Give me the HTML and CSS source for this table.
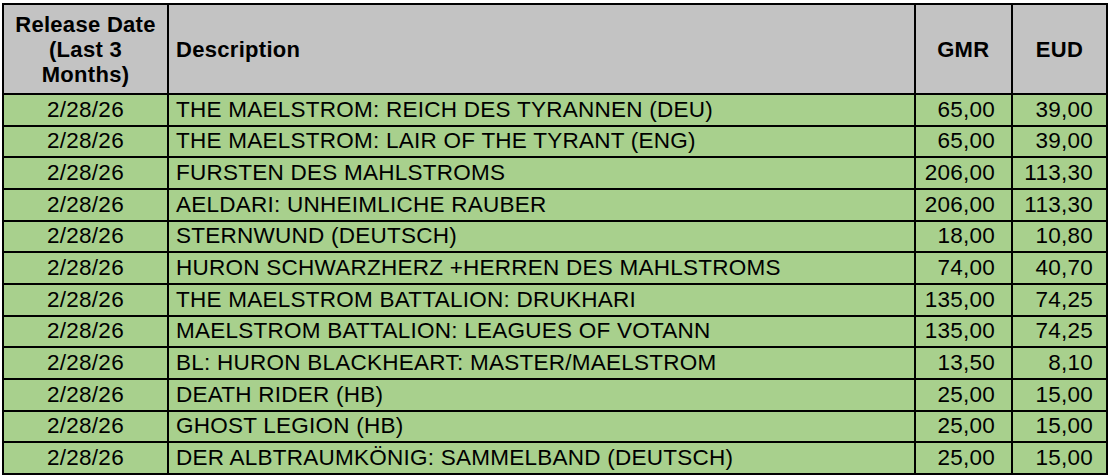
FILE: index.html
```html
<!DOCTYPE html>
<html lang="de">
<head>
<meta charset="utf-8">
<title>Release List</title>
<link rel="stylesheet" href="styles.css">
</head>
<body>
<table class="sheet">
  <colgroup>
    <col class="c-date">
    <col class="c-desc">
    <col class="c-gmr">
    <col class="c-eud">
  </colgroup>
  <thead>
    <tr class="head">
      <th class="h-date">Release Date<br>(Last 3<br>Months)</th>
      <th class="h-desc">Description</th>
      <th class="h-num">GMR</th>
      <th class="h-num">EUD</th>
    </tr>
  </thead>
  <tbody>
    <tr><td class="date">2/28/26</td><td class="desc">THE MAELSTROM: REICH DES TYRANNEN (DEU)</td><td class="gmr">65,00</td><td class="eud">39,00</td></tr>
    <tr><td class="date">2/28/26</td><td class="desc">THE MAELSTROM: LAIR OF THE TYRANT (ENG)</td><td class="gmr">65,00</td><td class="eud">39,00</td></tr>
    <tr><td class="date">2/28/26</td><td class="desc">FURSTEN DES MAHLSTROMS</td><td class="gmr">206,00</td><td class="eud">113,30</td></tr>
    <tr><td class="date">2/28/26</td><td class="desc">AELDARI: UNHEIMLICHE RAUBER</td><td class="gmr">206,00</td><td class="eud">113,30</td></tr>
    <tr><td class="date">2/28/26</td><td class="desc">STERNWUND (DEUTSCH)</td><td class="gmr">18,00</td><td class="eud">10,80</td></tr>
    <tr><td class="date">2/28/26</td><td class="desc">HURON SCHWARZHERZ +HERREN DES MAHLSTROMS</td><td class="gmr">74,00</td><td class="eud">40,70</td></tr>
    <tr><td class="date">2/28/26</td><td class="desc">THE MAELSTROM BATTALION: DRUKHARI</td><td class="gmr">135,00</td><td class="eud">74,25</td></tr>
    <tr><td class="date">2/28/26</td><td class="desc">MAELSTROM BATTALION: LEAGUES OF VOTANN</td><td class="gmr">135,00</td><td class="eud">74,25</td></tr>
    <tr><td class="date">2/28/26</td><td class="desc">BL: HURON BLACKHEART: MASTER/MAELSTROM</td><td class="gmr">13,50</td><td class="eud">8,10</td></tr>
    <tr><td class="date">2/28/26</td><td class="desc">DEATH RIDER (HB)</td><td class="gmr">25,00</td><td class="eud">15,00</td></tr>
    <tr><td class="date">2/28/26</td><td class="desc">GHOST LEGION (HB)</td><td class="gmr">25,00</td><td class="eud">15,00</td></tr>
    <tr><td class="date">2/28/26</td><td class="desc">DER ALBTRAUMKÖNIG: SAMMELBAND (DEUTSCH)</td><td class="gmr">25,00</td><td class="eud">15,00</td></tr>
  </tbody>
</table>
</body>
</html>
```

FILE: styles.css
```css
html, body {
  margin: 0;
  background: #ffffff;
}

body {
  padding: 3px 0 0 2px;
  font-family: "Liberation Sans", Arial, sans-serif;
  color: #000;
}

.sheet {
  border-collapse: collapse;
  table-layout: fixed;
  width: 1106px;
}

.c-date { width: 165px; }
.c-desc { width: 746.5px; }
.c-gmr { width: 97.5px; }
.c-eud { width: 95px; }

.sheet th,
.sheet td {
  border: 2px solid #000;
  padding: 0;
  white-space: nowrap;
  overflow: hidden;
}

.sheet .head th {
  background: #c3c3c3;
  font-weight: bold;
  font-size: 22px;
  letter-spacing: 0.3px;
  height: 88px;
  line-height: 25px;
  vertical-align: middle;
}

.sheet .h-date { text-align: center; }
.sheet .h-desc { text-align: left; padding-left: 7px; }
.sheet .h-num { text-align: center; }

.sheet tbody tr { height: 31.67px; }

.sheet td {
  background: #a8d08d;
  font-size: 22.5px;
  letter-spacing: 0.25px;
  line-height: 24px;
  vertical-align: middle;
}

.sheet .date { text-align: center; }
.sheet .desc { text-align: left; padding-left: 7px; }
.sheet .gmr { text-align: right; padding-right: 16px; }
.sheet .eud { text-align: right; padding-right: 13px; }
```
